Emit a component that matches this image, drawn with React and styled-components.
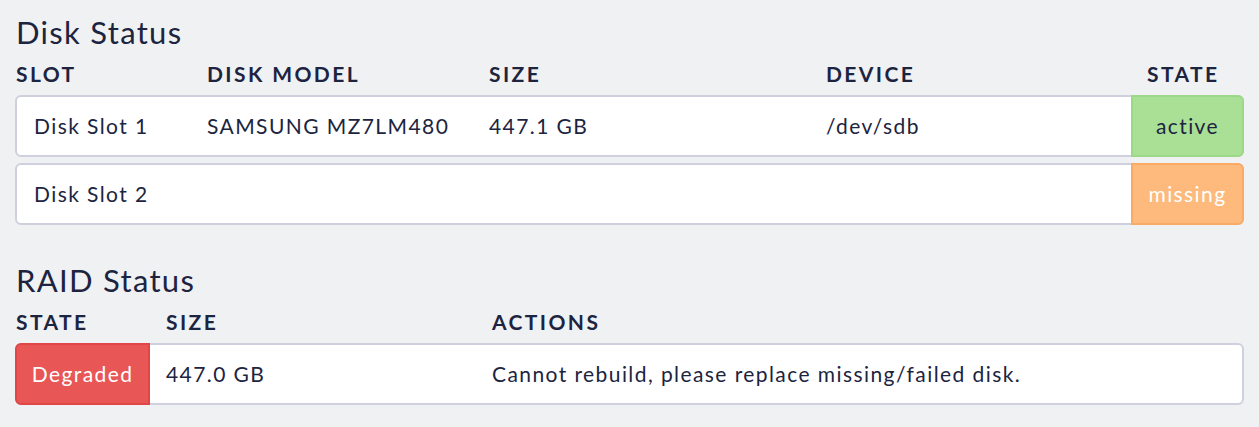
import React from "react";
import styled, { createGlobalStyle } from "styled-components";

const GlobalStyle = createGlobalStyle`
  *, *::before, *::after {
    box-sizing: border-box;
  }
  html, body {
    margin: 0;
    padding: 0;
    background: #f0f1f3;
  }
  body {
    font-family: Lato, "Noto Sans", sans-serif;
    color: #1c2440;
  }
`;

const disks = [
  { slot: "Disk Slot 1", model: "SAMSUNG MZ7LM480", size: "447.1 GB", device: "/dev/sdb", state: "active" },
  { slot: "Disk Slot 2", model: "", size: "", device: "", state: "missing" },
];

const stateColors = {
  active: { bg: "#a9e095", border: "#9bd887", color: "#1c2440" },
  missing: { bg: "#fdba7c", border: "#f9ab66", color: "#ffffff" },
  degraded: { bg: "#e85656", border: "#e04646", color: "#ffffff" },
};

const diskCols = "174px 282px 337px 321px 1fr";
const raidCols = "133px 326px 1fr";

const App = () => {
  return (
    <Page>
      <GlobalStyle />
      <Section>
        <Title>Disk Status</Title>
        <HeadRow $cols={diskCols}>
          <HeadCell $first>Slot</HeadCell>
          <HeadCell>Disk Model</HeadCell>
          <HeadCell>Size</HeadCell>
          <HeadCell>Device</HeadCell>
          <HeadCell>State</HeadCell>
        </HeadRow>
        <Rows>
          {disks.map((d) => (
            <Row key={d.slot} $cols={diskCols}>
              <Cell $first>{d.slot}</Cell>
              <Cell>{d.model}</Cell>
              <Cell>{d.size}</Cell>
              <Cell>{d.device}</Cell>
              <StateCell $state={d.state} $side="right">{d.state}</StateCell>
            </Row>
          ))}
        </Rows>
      </Section>

      <Section>
        <Title>RAID Status</Title>
        <HeadRow $cols={raidCols}>
          <HeadCell $first>State</HeadCell>
          <HeadCell>Size</HeadCell>
          <HeadCell>Actions</HeadCell>
        </HeadRow>
        <Rows>
          <Row $cols={raidCols}>
            <StateCell $state="degraded" $side="left">Degraded</StateCell>
            <Cell>447.0 GB</Cell>
            <Cell>Cannot rebuild, please replace missing/failed disk.</Cell>
          </Row>
        </Rows>
      </Section>
    </Page>
  );
};

export default App;

const Page = styled.div`
  padding: 12px 15px 20px 15px;
  display: flex;
  flex-direction: column;
  gap: 35px;
`;

const Section = styled.section`
  display: flex;
  flex-direction: column;
`;

const Title = styled.h2`
  margin: 0 0 0 1px;
  font-size: 31px;
  font-weight: 400;
  letter-spacing: 1.3px;
  line-height: 40px;
  color: #1c2440;
`;

const HeadRow = styled.div`
  display: grid;
  grid-template-columns: ${(p) => p.$cols};
  padding: 0 2px;
  height: 43px;
  align-items: center;
`;

const HeadCell = styled.div`
  padding-left: ${(p) => (p.$first ? "0" : "16px")};
  margin-left: ${(p) => (p.$first ? "-1px" : "0")};
  font-size: 21px;
  font-weight: 700;
  text-transform: uppercase;
  letter-spacing: 2.4px;
  color: #1c2440;
`;

const Rows = styled.div`
  display: flex;
  flex-direction: column;
  gap: 6px;
`;

const Row = styled.div`
  display: grid;
  grid-template-columns: ${(p) => p.$cols};
  height: 62px;
  background: #ffffff;
  border: 2px solid #cfd0dd;
  border-radius: 6px;
  align-items: center;
`;

const Cell = styled.div`
  padding-left: ${(p) => (p.$first ? "17px" : "16px")};
  padding-bottom: 2px;
  font-size: 21px;
  letter-spacing: 1.42px;
  color: #1c2440;
  white-space: nowrap;
`;

const StateCell = styled.div`
  align-self: stretch;
  margin: ${(p) => (p.$side === "right" ? "-2px -2px -2px 0" : "-2px 0 -2px -2px")};
  border: 2px solid ${(p) => stateColors[p.$state].border};
  border-radius: ${(p) => (p.$side === "right" ? "0 6px 6px 0" : "6px 0 0 6px")};
  background: ${(p) => stateColors[p.$state].bg};
  color: ${(p) => stateColors[p.$state].color};
  font-size: 21px;
  letter-spacing: 1.42px;
  padding-bottom: 2px;
  display: flex;
  align-items: center;
  justify-content: center;
`;
